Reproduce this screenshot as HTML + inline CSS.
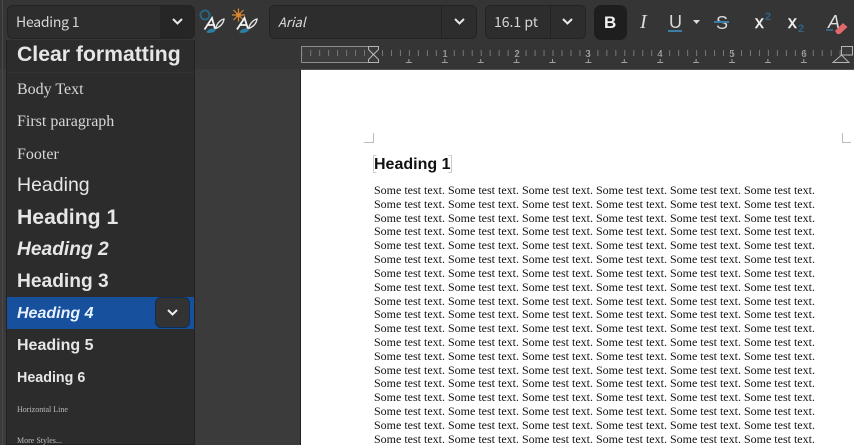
<!DOCTYPE html>
<html><head><meta charset="utf-8"><style>
html,body{margin:0;padding:0;width:854px;height:445px;overflow:hidden;background:#3a3a3a}
#r{position:relative;width:854px;height:445px;overflow:hidden;background:#3b3b3b}
#r div,#r span{position:absolute;white-space:nowrap}
.ui{font-family:"Noto Sans CJK SC","DejaVu Sans",sans-serif;color:#ddd}
.s{font-family:"Liberation Sans",sans-serif;font-weight:700;color:#e6e6e6;left:17px}
.t{font-family:"Liberation Serif",serif;color:#d8d8d8;left:17px}
.box{background:#2d2d2d;border:1px solid #232323;border-radius:6px;box-sizing:border-box}
#page{left:301px;top:70px;width:553px;height:375px;background:#fff}
#txt{left:374px;top:184px;font:12px/13.82px "Liberation Serif",serif;color:#111}
</style></head><body><div id="r">
<div style="left:0;top:0;width:854px;height:42px;background:#353535"></div>
<div style="left:0;top:42px;width:854px;height:27px;background:#353535"></div>
<div style="left:301px;top:69px;width:553px;height:1px;background:#555"></div>
<div style="left:2px;top:0;width:1px;height:445px;background:#4a4a4a"></div>
<div style="left:300px;top:70px;width:1px;height:375px;background:#222"></div>

<!-- style combo -->
<div class="box" style="left:7px;top:5px;width:188px;height:34px"></div>
<div style="left:160px;top:6px;width:34px;height:32px;background:#262626;border-radius:0 5px 5px 0"></div>
<div class="ui" style="left:16px;top:12px;font-size:14px;letter-spacing:-.25px;line-height:20px;color:#d6d6d6">Heading 1</div>

<!-- font combo -->
<div class="box" style="left:269px;top:5px;width:208px;height:34px"></div>
<div style="left:441px;top:6px;width:1px;height:32px;background:#232323"></div>
<div class="ui" style="left:278px;top:12px;font-size:13px;line-height:20px;font-style:italic;color:#ddd">Arial</div>
<!-- size combo -->
<div class="box" style="left:485px;top:5px;width:101px;height:34px"></div>
<div style="left:550px;top:6px;width:1px;height:32px;background:#232323"></div>
<div class="ui" style="left:494px;top:12px;font-size:14px;line-height:20px;color:#d6d6d6">16.1 pt</div>
<!-- bold -->
<div style="left:594px;top:5px;width:33px;height:35px;background:#1e1e1e;border-radius:7px"></div>
<div style="left:604px;top:12px;font:700 17px/22px 'Liberation Sans',sans-serif;color:#f2f2f2">B</div>
<div style="left:640px;top:11px;font:italic 20px/22px 'Liberation Serif',serif;color:#dcdcdc">I</div>
<div style="left:669px;top:11px;font:18px/22px 'Liberation Sans',sans-serif;color:#d8d8d8">U</div>
<div style="left:668px;top:30px;width:14px;height:1.5px;background:#3d7ea6"></div>
<div style="left:716px;top:12px;font:18px/22px 'Liberation Sans',sans-serif;color:#d8d8d8">S</div>
<div style="left:714px;top:21px;width:15px;height:1.5px;background:#3d7ea6"></div>
<div style="left:755px;top:12px;font:17.500px/20px 'Liberation Sans',sans-serif;color:#eee;-webkit-text-stroke:.5px #eee">x</div>
<div style="left:765px;top:11px;font:700 11px/12px 'Liberation Sans',sans-serif;color:#2f6484">2</div>
<div style="left:788px;top:12px;font:17.500px/20px 'Liberation Sans',sans-serif;color:#eee;-webkit-text-stroke:.5px #eee">x</div>
<div style="left:798px;top:23px;font:700 11px/12px 'Liberation Sans',sans-serif;color:#2f6484">2</div>
<div style="left:828px;top:11px;font:italic 18px/22px 'Liberation Sans',sans-serif;color:#ddd">A</div>

<svg style="position:absolute;left:0;top:0" width="854" height="70" fill="none">
 <defs>
  <pattern id="tk" x="373" y="0" width="8.975" height="70" patternUnits="userSpaceOnUse"><rect x="0" y="50" width="1" height="6" fill="#777"/></pattern>
  <pattern id="tb" x="373" y="0" width="35.900" height="70" patternUnits="userSpaceOnUse"><path d="M0 59V62M-3 62.500H3M35.900 59V62M32.900 62.500H38.900" stroke="#a0a0a0"/></pattern>
 </defs>
 <path d="M173 19l4.500 4.500L182 19M455 19l4.500 4.500L464 19M563 19l4.500 4.500L572 19" stroke="#e8e8e8" stroke-width="2"/>
 <path d="M693 20h7l-3.500 4z" fill="#ddd"/>
 <!-- style icons -->
 <circle cx="205" cy="15" r="4.500" stroke="#2a6480" stroke-width="2"/>
 <path d="M204.500 29.500L212 18L215 29M208 25h7" stroke="#f2f2f2" stroke-width="1.800"/>
 <path d="M224 19c-3 .5-7 4-8.500 9.500 4.500-1.500 8-5 8.500-9.500z" stroke="#e8e8e8" stroke-width="1.300"/>
 <path d="M207 32c2-3 6-3.500 8.500-2.500-1 2.500-5 3.500-8.500 2.500z" fill="#2f7fa5" stroke="#2f7fa5"/>
 <path d="M233.500 10l10 10M243.500 10l-10 10M238.500 8.500v13M232 15h13" stroke="#d8872e" stroke-width="1.200"/>
 <circle cx="238.500" cy="15" r="2.500" fill="#d8872e"/>
 <path d="M237 29.500L244.500 18L248 29M240.500 25h7" stroke="#f2f2f2" stroke-width="1.800"/>
 <path d="M257 19c-3 .5-7 4-8.500 9.500 4.500-1.500 8-5 8.500-9.500z" stroke="#e8e8e8" stroke-width="1.300"/>
 <path d="M240 32c2-3 6-3.500 8.500-2.500-1 2.500-5 3.500-8.500 2.500z" fill="#2f7fa5" stroke="#2f7fa5"/>
 <!-- eraser -->
 <path d="M835 31l8-8 4.500 4-7.500 7h-3z" fill="#e4676d"/>
 <path d="M826 30h7" stroke="#3d7ea6" stroke-width="1.300"/>
 <!-- ruler -->
 <rect x="301.500" y="46.500" width="71" height="16" fill="#3d3d3d" stroke="#8c8c8c"/>
 <rect x="302" y="50" width="552" height="6" fill="url(#tk)"/>
 <rect x="376" y="49" width="478" height="15" fill="url(#tb)"/>
 <path d="M368.500 46.500h10v3l-5 5-5-5zM368.500 62.500h10v-3l-5-5-5 5z" fill="#3a3a3a" stroke="#b5b5b5"/>
 <path d="M841.500 46.500h11v8.500h-11z" fill="#3a3a3a" stroke="#b5b5b5"/>
 <path d="M833 62.500h16l-7.500-7.500z" fill="#3a3a3a" stroke="#b5b5b5"/>
 <g fill="#a8a8a8" font-family="Liberation Sans,sans-serif" font-size="10" text-anchor="middle">
  <text x="445" y="57">1</text><text x="517" y="57">2</text><text x="588" y="57">3</text><text x="660" y="57">4</text><text x="732" y="57">5</text><text x="804" y="57">6</text>
 </g>
</svg>

<!-- style list -->
<div style="left:6px;top:40px;width:189px;height:405px;background:#2c2c2c;border:1px solid #222;border-top:0;box-sizing:border-box"></div>
<div class="s" style="top:41px;font-size:21.200px;line-height:28px">Clear formatting</div>
<div style="left:7px;top:72px;width:187px;height:1px;background:#333"></div>
<div class="t" style="top:80px;font-size:16px;line-height:20px">Body Text</div>
<div class="t" style="top:112px;font-size:16px;line-height:20px">First paragraph</div>
<div class="t" style="top:145px;font-size:16px;line-height:20px">Footer</div>
<div class="s" style="top:173px;font-size:19.500px;line-height:25px;font-weight:400">Heading</div>
<div class="s" style="top:205px;font-size:21.200px;line-height:26px">Heading 1</div>
<div class="s" style="top:237px;font-size:19.200px;line-height:25px;font-style:italic">Heading 2</div>
<div class="s" style="top:269px;font-size:19.200px;line-height:25px">Heading 3</div>
<div style="left:7px;top:297px;width:187px;height:32px;background:#17509c"></div>
<div class="s" style="top:302.500px;font-size:16px;line-height:21px;font-style:italic;color:#e8f1ff">Heading 4</div>
<div style="left:155px;top:297px;width:35px;height:31px;background:#333;border:1px solid #0f2d55;border-radius:6px;box-sizing:border-box"></div>
<div class="s" style="top:334.500px;font-size:16px;line-height:21px">Heading 5</div>
<div class="s" style="top:369px;font-size:14.300px;line-height:18px">Heading 6</div>
<div class="t" style="top:404px;font-size:8px;line-height:12px;color:#bbb">Horizontal Line</div>
<div class="t" style="top:435px;font-size:8px;line-height:12px;color:#bbb">More Styles...</div>
<svg style="position:absolute;left:0;top:0" width="200" height="340" fill="none"><path d="M168 310l4.500 4.500L177 310" stroke="#eee" stroke-width="2"/></svg>

<!-- page -->
<div id="page"></div>
<svg style="position:absolute;left:301px;top:70px" width="553" height="110" fill="none" stroke="#bbb">
 <path d="M72.500 63V72.500H63M541.500 63V72.500H550"/>
 <path d="M75.500 85.500H72.500V102.500H75.500M147.500 85.500H150.500V102.500H147.500" stroke="#ccc"/>
</svg>
<div style="left:374px;top:154.500px;font:700 16px/19px 'Liberation Sans',sans-serif;color:#111">Heading 1</div>
<div id="txt">Some test text. Some test text. Some test text. Some test text. Some test text. Some test text.<br>Some test text. Some test text. Some test text. Some test text. Some test text. Some test text.<br>Some test text. Some test text. Some test text. Some test text. Some test text. Some test text.<br>Some test text. Some test text. Some test text. Some test text. Some test text. Some test text.<br>Some test text. Some test text. Some test text. Some test text. Some test text. Some test text.<br>Some test text. Some test text. Some test text. Some test text. Some test text. Some test text.<br>Some test text. Some test text. Some test text. Some test text. Some test text. Some test text.<br>Some test text. Some test text. Some test text. Some test text. Some test text. Some test text.<br>Some test text. Some test text. Some test text. Some test text. Some test text. Some test text.<br>Some test text. Some test text. Some test text. Some test text. Some test text. Some test text.<br>Some test text. Some test text. Some test text. Some test text. Some test text. Some test text.<br>Some test text. Some test text. Some test text. Some test text. Some test text. Some test text.<br>Some test text. Some test text. Some test text. Some test text. Some test text. Some test text.<br>Some test text. Some test text. Some test text. Some test text. Some test text. Some test text.<br>Some test text. Some test text. Some test text. Some test text. Some test text. Some test text.<br>Some test text. Some test text. Some test text. Some test text. Some test text. Some test text.<br>Some test text. Some test text. Some test text. Some test text. Some test text. Some test text.<br>Some test text. Some test text. Some test text. Some test text. Some test text. Some test text.<br>Some test text. Some test text. Some test text. Some test text. Some test text. Some test text.</div>
</div></body></html>
